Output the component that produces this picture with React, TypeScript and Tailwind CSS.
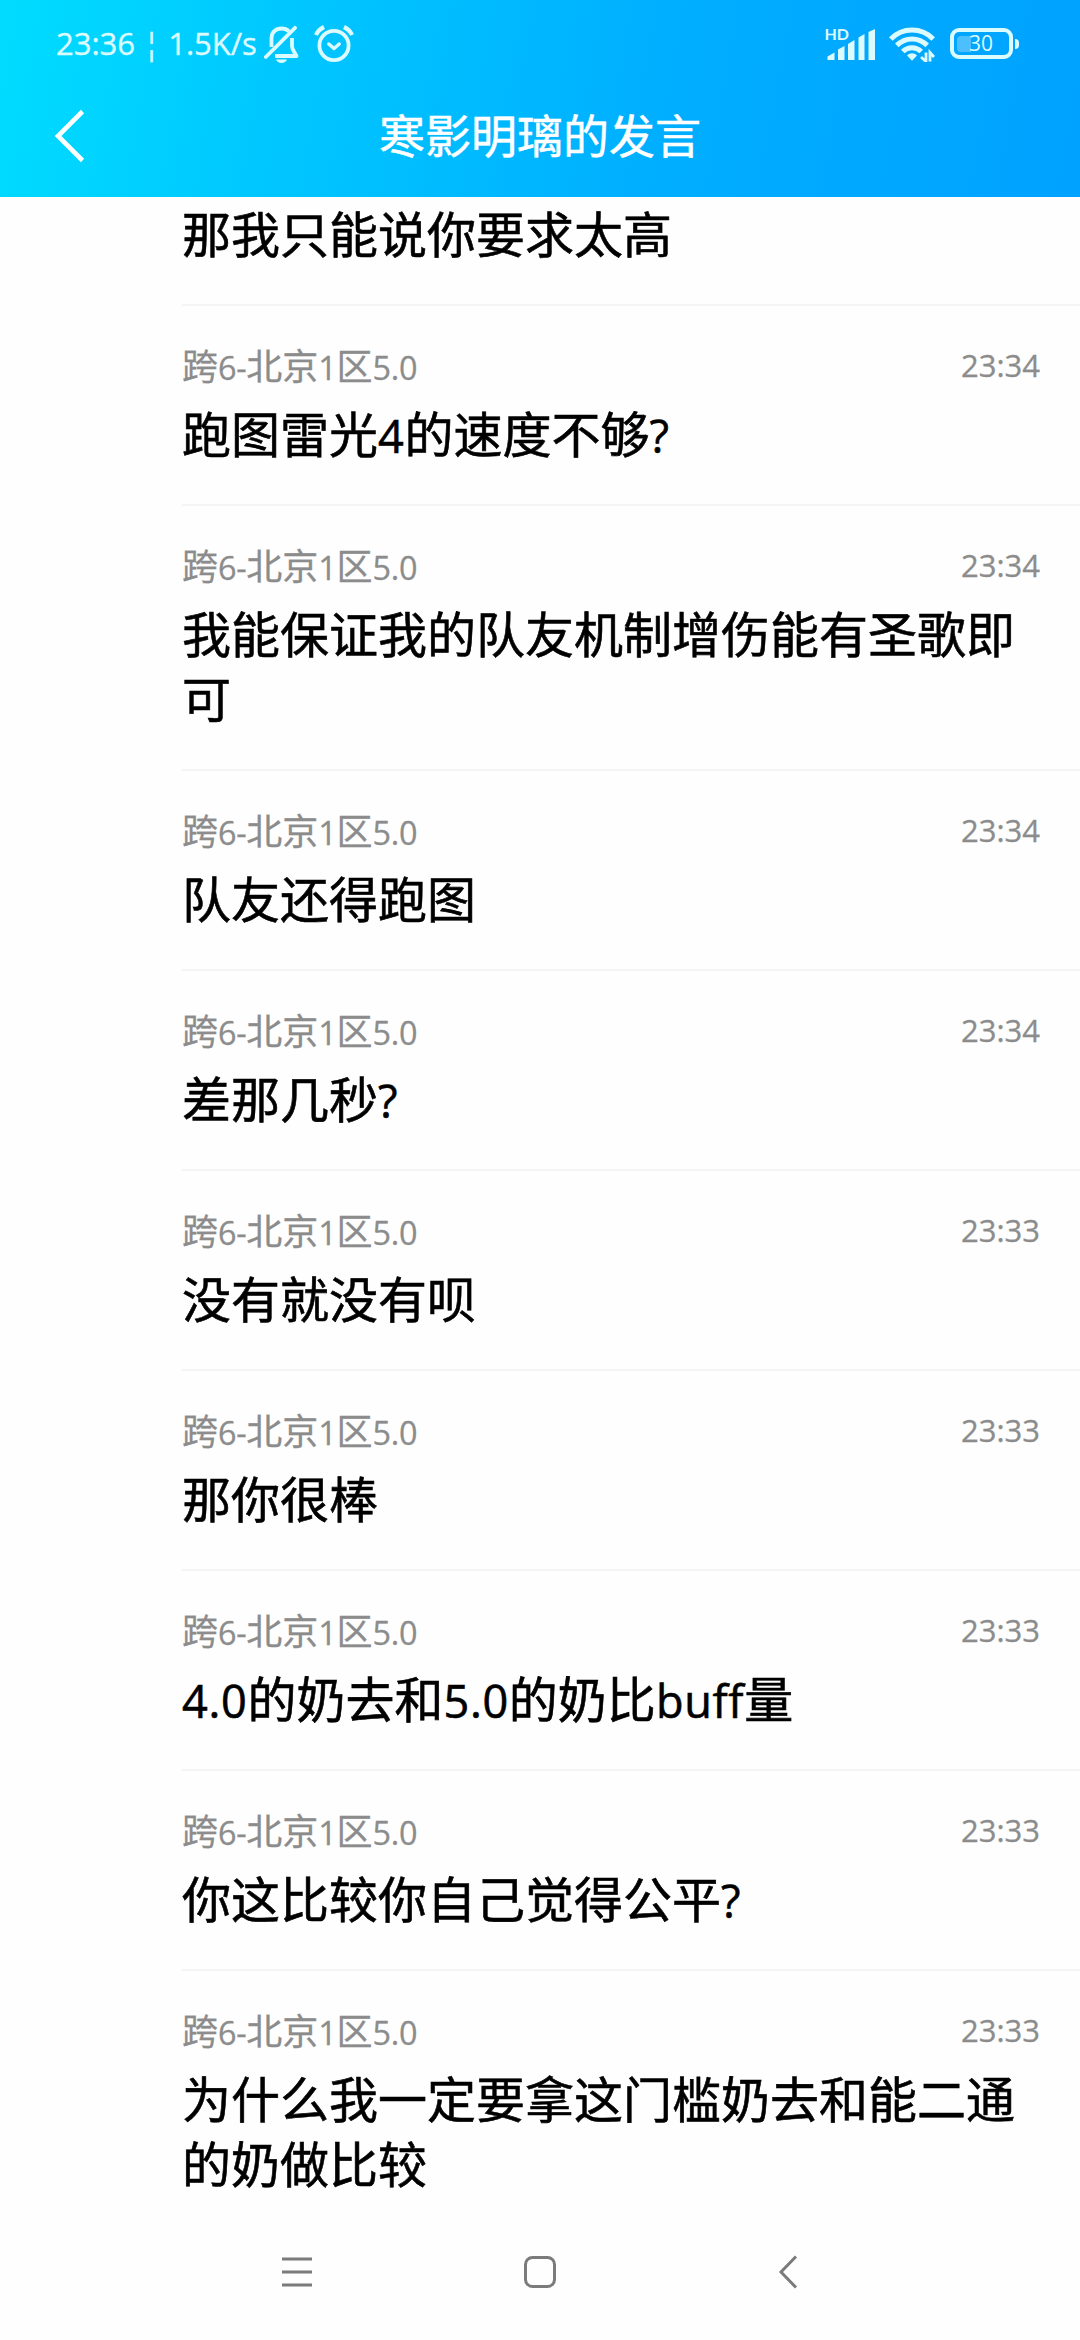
import { Fragment } from 'react';

interface Message {
  tag: string;
  time: string;
  text: string;
}

const TAG = '跨6-北京1区5.0';

const messages: Message[] = [
  { tag: TAG, time: '23:34', text: '跑图雷光4的速度不够?' },
  { tag: TAG, time: '23:34', text: '我能保证我的队友机制增伤能有圣歌即可' },
  { tag: TAG, time: '23:34', text: '队友还得跑图' },
  { tag: TAG, time: '23:34', text: '差那几秒?' },
  { tag: TAG, time: '23:33', text: '没有就没有呗' },
  { tag: TAG, time: '23:33', text: '那你很棒' },
  { tag: TAG, time: '23:33', text: '4.0的奶去和5.0的奶比buff量' },
  { tag: TAG, time: '23:33', text: '你这比较你自己觉得公平?' },
  { tag: TAG, time: '23:33', text: '为什么我一定要拿这门槛奶去和能二通的奶做比较' },
];

// Latin letters and digits are set a little smaller than the Chinese text
function Mixed({ text, latinClass }: { text: string; latinClass: string }) {
  return (
    <>
      {text.split(/([\x20-\x7e]+)/).map((part, i) =>
        i % 2 === 1 ? (
          <span key={i} className={latinClass}>
            {part}
          </span>
        ) : (
          <Fragment key={i}>{part}</Fragment>
        ),
      )}
    </>
  );
}

function BellOffIcon() {
  return (
    <svg className="h-10 w-9" viewBox="0 0 36 40" fill="none" stroke="currentColor" strokeWidth={3.8} strokeLinejoin="round">
      <path d="M7.5 23V14C7.5 8 12 4.5 17.5 4.5C20.5 4.5 23 5.5 25 7.3" />
      <path d="M28 14V22C28 26 30.5 28 32.5 32H11" />
      <path d="M1.8 33L31 3.8" strokeLinecap="round" />
      <path d="M12 35.5H23C22 37.8 20.2 39 17.5 39C14.8 39 13 37.8 12 35.5Z" fill="currentColor" stroke="none" />
    </svg>
  );
}

function AlarmIcon() {
  return (
    <svg className="h-10 w-10" viewBox="0 0 40 40" fill="none" stroke="currentColor" strokeWidth={3.8}>
      <circle cx="20" cy="21.5" r="14.6" />
      <path d="M14.8 20L20 24.6L25.2 20" strokeWidth={3.4} strokeLinecap="round" strokeLinejoin="round" />
      <path d="M2 11C3.5 7.5 6 5 10 3M38 11C36.5 7.5 34 5 30 3" strokeWidth={4.2} />
    </svg>
  );
}

function SignalIcon() {
  return (
    <svg className="h-[34px] w-[51px] overflow-visible" viewBox="0 0 51 34" fill="currentColor">
      <path d="M2.5 33V29.5L9.5 25.5V33ZM13 33V22.5L19.5 19V33ZM23 33V17L29.5 13V33ZM33.5 33V10.5L39.5 7V33ZM43.5 33V5L50 2V33Z" />
      <text x="-0.5" y="12.5" fontSize="16" fontWeight="700" fontFamily="Lato, sans-serif">
        HD
      </text>
    </svg>
  );
}

function WifiIcon() {
  return (
    <svg className="h-[36px] w-[46px]" viewBox="0 0 46 36" fill="none" stroke="currentColor" strokeWidth={5}>
      <path d="M1.8 13C13.5 1 32.5 1 44.2 13" />
      <path d="M7.8 19.4C16.5 10.8 29.5 10.8 38.2 19.4" />
      <path d="M13.8 25.5C19 20.4 27 20.4 32.2 25.5" />
      <path d="M18 29.5C20.8 26.4 25.2 26.4 28 29.5L23 34.8Z" fill="currentColor" stroke="none" />
      <path d="M37 26.5V35.5L32 31M41 35.5V26.5L45 31" strokeWidth={2.8} />
    </svg>
  );
}

function StatusBar() {
  return (
    <div className="flex h-[87px] items-center pl-[56px] pr-[61px] text-[#dcfbff]">
      <span className="w-[208px] whitespace-nowrap text-[31px] leading-none [-webkit-text-stroke:0.4px]">23:36 ¦ 1.5K/s</span>
      <BellOffIcon />
      <div className="ml-[14px]">
        <AlarmIcon />
      </div>
      <div className="ml-auto flex items-center">
        <SignalIcon />
        <div className="ml-[13px]">
          <WifiIcon />
        </div>
        <div className="ml-[15px] flex h-[31px] w-[63px] items-center rounded-[9px] border-4 border-current px-[3px]">
          <div className="h-[16px] w-[14px] rounded-l-sm bg-[#4dbfff]" />
          <span className="-ml-[2px] text-[21px] leading-none">30</span>
        </div>
        <div className="ml-[2px] h-[10px] w-1 rounded-r-sm bg-current" />
      </div>
    </div>
  );
}

function Header() {
  return (
    <header className="h-[197px] shrink-0 bg-[linear-gradient(100deg,#00dcff_0%,#00c4ff_30%,#00aeff_62%,#00a2ff_100%)]">
      <StatusBar />
      <div className="grid h-[98px] grid-cols-[120px_1fr_120px] items-center text-white">
        <svg className="ml-[54px] h-[54px] w-8" viewBox="0 0 32 54" fill="none" stroke="currentColor" strokeWidth={4.6}>
          <path d="M28.5 2.5L4 27L28.5 51.5" />
        </svg>
        <h1 className="pb-[3px] text-center text-[46px] leading-none [-webkit-text-stroke:0.5px]">寒影明璃的发言</h1>
      </div>
    </header>
  );
}

function MessageRow({ tag, time, text }: Message) {
  return (
    <li className="border-t-2 border-[#f4f4f4] pb-[37px] pr-[40px] pt-[35px]">
      <div className="flex h-[61px] items-start justify-between text-[#8c8c8c] [-webkit-text-stroke:0.3px]">
        <span className="text-[36px] leading-[52px]">
          <Mixed text={tag} latinClass="text-[0.9em] leading-none tracking-[-0.01em]" />
        </span>
        <span className="text-[31px] leading-[48px]">{time}</span>
      </div>
      <p className="w-[850px] text-[49px] leading-[65px] text-black [-webkit-text-stroke:0.6px]">
        <Mixed text={text} latinClass="text-[0.92em] leading-none tracking-[0.015em] [font-variant-ligatures:none]" />
      </p>
    </li>
  );
}

function NavBar() {
  return (
    <nav className="grid h-[136px] shrink-0 grid-cols-3 items-center px-[174px] text-[#7b7b7b]">
      <svg className="ml-[105px] h-9 w-9" viewBox="0 0 36 36" fill="none" stroke="currentColor" strokeWidth={3}>
        <path d="M3 5H33M3 18H33M3 31H33" />
      </svg>
      <svg className="mx-auto h-9 w-9" viewBox="0 0 36 36" fill="none" stroke="currentColor" strokeWidth={3}>
        <rect x="3.5" y="3.5" width="29" height="29" rx="7" />
      </svg>
      <svg className="ml-[115px] h-9 w-9" viewBox="0 0 36 36" fill="none" stroke="currentColor" strokeWidth={3}>
        <path d="M19 2.5L4 18L19 33.5" />
      </svg>
    </nav>
  );
}

export default function App() {
  return (
    <div className="flex h-[2340px] w-[1080px] flex-col overflow-hidden bg-[#fefefe] font-['Open_Sans','Noto_Sans_CJK_SC',sans-serif]">
      <Header />
      <main className="min-h-0 flex-1 overflow-hidden pl-[182px]">
        <p className="h-[107px] pt-[5px] text-[49px] leading-[65px] text-black [-webkit-text-stroke:0.6px]">那我只能说你要求太高</p>
        <ul>
          {messages.map((message, index) => (
            <MessageRow key={index} {...message} />
          ))}
        </ul>
      </main>
      <NavBar />
    </div>
  );
}
